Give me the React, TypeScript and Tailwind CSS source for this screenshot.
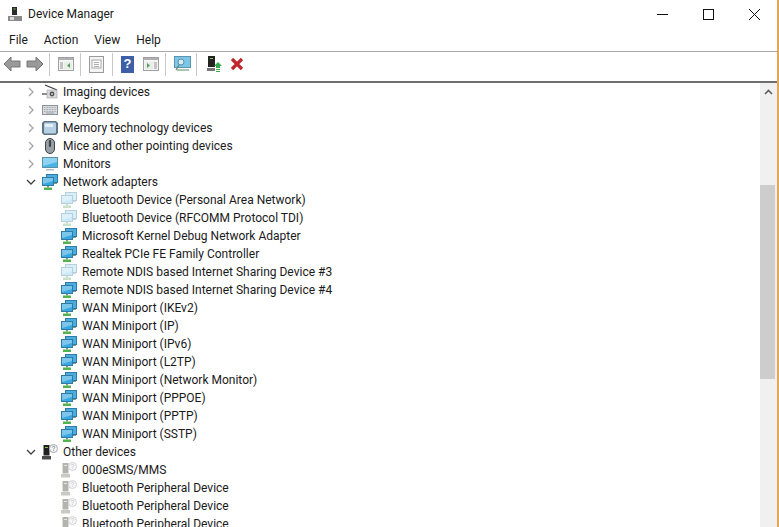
const WAN = ['IKEv2', 'IP', 'IPv6', 'L2TP', 'Network Monitor', 'PPPOE', 'PPTP', 'SSTP']

type IconKind = 'imaging' | 'keyboard' | 'memory' | 'mouse' | 'monitor' | 'net' | 'netOff' | 'other' | 'unknown'

interface Row {
  label: string
  icon: IconKind
  depth: 0 | 1
  state?: 'open' | 'closed'
}

const ROWS: Row[] = [
  { label: 'Imaging devices', icon: 'imaging', depth: 0, state: 'closed' },
  { label: 'Keyboards', icon: 'keyboard', depth: 0, state: 'closed' },
  { label: 'Memory technology devices', icon: 'memory', depth: 0, state: 'closed' },
  { label: 'Mice and other pointing devices', icon: 'mouse', depth: 0, state: 'closed' },
  { label: 'Monitors', icon: 'monitor', depth: 0, state: 'closed' },
  { label: 'Network adapters', icon: 'net', depth: 0, state: 'open' },
  { label: 'Bluetooth Device (Personal Area Network)', icon: 'netOff', depth: 1 },
  { label: 'Bluetooth Device (RFCOMM Protocol TDI)', icon: 'netOff', depth: 1 },
  { label: 'Microsoft Kernel Debug Network Adapter', icon: 'net', depth: 1 },
  { label: 'Realtek PCIe FE Family Controller', icon: 'net', depth: 1 },
  { label: 'Remote NDIS based Internet Sharing Device #3', icon: 'netOff', depth: 1 },
  { label: 'Remote NDIS based Internet Sharing Device #4', icon: 'net', depth: 1 },
  ...WAN.map((w): Row => ({ label: `WAN Miniport (${w})`, icon: 'net', depth: 1 })),
  { label: 'Other devices', icon: 'other', depth: 0, state: 'open' },
  { label: '000eSMS/MMS', icon: 'unknown', depth: 1 },
  { label: 'Bluetooth Peripheral Device', icon: 'unknown', depth: 1 },
  { label: 'Bluetooth Peripheral Device', icon: 'unknown', depth: 1 },
  { label: 'Bluetooth Peripheral Device', icon: 'unknown', depth: 1 },
]

function NetIcon({ faded }: { faded?: boolean }) {
  const edge = faded ? '#b4d0de' : '#2f7aa8'
  const back = faded ? '#d9eff8' : '#49aede'
  const front = faded ? '#cdeaf6' : '#38a8e0'
  const foot = faded ? '#c9e0c9' : '#52b352'
  return (
    <svg width="16" height="16" viewBox="0 0 16 16">
      <rect x="4.5" y="0.5" width="11" height="8" fill={back} stroke={edge} />
      <rect x="0.5" y="3.5" width="11" height="8" fill={front} stroke={edge} />
      <path d="M1 4h10v3L1 10z" fill="#ffffff" opacity="0.35" />
      <path d="M5 12h2v1.500H5z" fill={faded ? '#ccd6cc' : '#7a9a7a'} />
      <path d="M2 13.500h8V16H2z" fill={foot} />
      <path d="M12 9h3v1h-3z" fill={faded ? '#ccd6cc' : '#7d9a7d'} />
    </svg>
  )
}

function UnknownIcon({ dark }: { dark?: boolean }) {
  const body = dark ? '#222222' : '#b4b4ae'
  const base = dark ? '#4a4a4a' : '#c9c9c3'
  return (
    <svg width="16" height="16" viewBox="0 0 16 16">
      <path d="M1.500 1h6v10.500h-6z" fill={body} />
      <path d="M3 3h3v1H3z" fill={dark ? '#8ec04f' : '#e4e4e0'} />
      <path d="M0 12h9v3.500H0z" fill={base} />
      <circle cx="11.500" cy="4.500" r="4" fill="#f7f7f7" stroke={dark ? '#a8a8a8' : '#d2d2d2'} />
      <path d="M10.200 3.400c.2-1.400 2.600-1.400 2.600 0 0 1-1.300 1-1.300 2M11.500 6.300v.7" fill="none" stroke={dark ? '#6d7f96' : '#c2c8d0'} strokeWidth="0.9" />
    </svg>
  )
}

function DeviceIcon({ kind }: { kind: IconKind }) {
  switch (kind) {
    case 'imaging':
      return (
        <svg width="16" height="16" viewBox="0 0 16 16">
          <path d="M3 1l12 5" stroke="#3a3a3a" strokeWidth="1.200" fill="none" />
          <path d="M0 9h5v2H0z" fill="#8d8d8d" />
          <path d="M5 6h10v8H5z" fill="#d9d9d9" stroke="#a0a0a0" strokeWidth="0.6" />
          <circle cx="10" cy="10" r="2.400" fill="#4b4f55" />
          <circle cx="10" cy="10" r="1" fill="#cfd8e0" />
        </svg>
      )
    case 'keyboard':
      return (
        <svg width="16" height="16" viewBox="0 0 16 16">
          <rect x="0.5" y="3.5" width="15" height="9" fill="#d8dce0" stroke="#8d9298" />
          <path d="M2 5.500h12M2 7.500h12M2 9.500h12" stroke="#a4a9ae" strokeDasharray="1 0.6" />
          <path d="M4 11h8" stroke="#9aa0a6" />
        </svg>
      )
    case 'memory':
      return (
        <svg width="16" height="16" viewBox="0 0 16 16">
          <path d="M2 1h12l2 2v10l-2 2H2l-2-2V3z" fill="#5f7484" />
          <rect x="2" y="2.500" width="12" height="11" rx="1" fill="#b4d0e2" />
          <path d="M3 4h8v3H3z" fill="#e4f0f7" />
        </svg>
      )
    case 'mouse':
      return (
        <svg width="16" height="16" viewBox="0 0 16 16">
          <rect x="3.500" y="0.5" width="9" height="15" rx="4.500" fill="#98a0a8" stroke="#3f4347" />
          <rect x="6.900" y="2" width="2.200" height="7" rx="1" fill="#3f454c" />
        </svg>
      )
    case 'monitor':
      return (
        <svg width="16" height="16" viewBox="0 0 16 16">
          <rect x="0.5" y="1.5" width="15" height="10" fill="#49b4e6" stroke="#5c8fa8" />
          <path d="M1 2h14v4L1 10z" fill="#8ed4f2" />
          <path d="M4 13h8v1.500H4z" fill="#b4bcc2" />
        </svg>
      )
    case 'net':
      return <NetIcon />
    case 'netOff':
      return <NetIcon faded />
    case 'other':
      return <UnknownIcon dark />
    default:
      return <UnknownIcon />
  }
}

function Chevron({ open }: { open: boolean }) {
  return (
    <svg width="10" height="10" viewBox="0 0 10 10" className="shrink-0">
      <path d={open ? 'M1 3l4 4 4-4' : 'M3 1l4 4-4 4'} fill="none" stroke={open ? '#404040' : '#a6a6a6'} strokeWidth="1.3" />
    </svg>
  )
}

function TreeRow({ row }: { row: Row }) {
  return (
    <div className={`flex h-[18px] shrink-0 items-center ${row.depth === 1 ? 'pl-[61px]' : 'pl-[26px]'}`}>
      {row.depth === 0 && (
        <div className="mr-[6px] flex w-[10px] justify-center">
          <Chevron open={row.state === 'open'} />
        </div>
      )}
      <DeviceIcon kind={row.icon} />
      <span className="ml-[5px] whitespace-nowrap">{row.label}</span>
    </div>
  )
}

function ToolSep() {
  return <div className="h-[23px] w-px bg-[#c8c8c8]" />
}

function Toolbar() {
  return (
    <div className="flex h-[29px] shrink-0 items-center pb-[5px] pl-[3px]">
      <svg width="18" height="16" viewBox="0 0 18 16">
        <path d="M8 1L1 8l7 7v-4h9V5H8z" fill="#9a9a9a" stroke="#777777" />
      </svg>
      <svg width="18" height="16" viewBox="0 0 18 16" className="ml-[5px]">
        <path d="M10 1l7 7-7 7v-4H1V5h9z" fill="#9a9a9a" stroke="#777777" />
      </svg>
      <div className="ml-[5px]"><ToolSep /></div>
      <svg width="16" height="14" viewBox="0 0 16 14" className="ml-[8px]">
        <rect x="0.5" y="0.5" width="15" height="13" fill="#f4f4f4" stroke="#a0a0a0" />
        <path d="M1 1h14v2H1z" fill="#b0b0b0" />
        <path d="M2 5h3v7H2z" fill="#c4c4c4" />
        <path d="M6 5h8v7H6z" fill="#e6eee6" />
        <path d="M12 6v5L9 8.500z" fill="#5c9c63" />
      </svg>
      <div className="ml-[6px]"><ToolSep /></div>
      <svg width="15" height="17" viewBox="0 0 15 17" className="ml-[8px]">
        <rect x="0.5" y="0.5" width="14" height="16" fill="#f4f4f4" stroke="#9a9a9a" />
        <rect x="3" y="4" width="9" height="8" fill="#ffffff" stroke="#a8a8a8" />
        <path d="M5 6.500h5M5 8.500h5M5 10.500h5" stroke="#b0b0b0" />
      </svg>
      <div className="ml-[8px]"><ToolSep /></div>
      <div className="ml-[8px] flex h-[17px] w-[13px] items-center justify-center bg-[#3c5fa8] font-['Liberation_Sans',sans-serif] text-[13px] font-bold text-white">?</div>
      <svg width="16" height="14" viewBox="0 0 16 14" className="ml-[9px]">
        <rect x="0.5" y="0.5" width="15" height="13" fill="#f4f4f4" stroke="#a0a0a0" />
        <path d="M1 1h14v2H1z" fill="#b0b0b0" />
        <path d="M11 5h3v7h-3z" fill="#c4c4c4" />
        <path d="M2 5h8v7H2z" fill="#e6eee6" />
        <path d="M4 6v5l3-2.500z" fill="#5c9c63" />
      </svg>
      <div className="ml-[6px]"><ToolSep /></div>
      <svg width="17" height="16" viewBox="0 0 17 16" className="ml-[8px]">
        <rect x="0.5" y="0.5" width="16" height="11" fill="#7cc6e8" stroke="#5c93ad" />
        <circle cx="7" cy="6" r="3" fill="#d4eef9" stroke="#5f8ea5" />
        <path d="M5 9l-3 5M3 14h12" stroke="#5f8a6a" strokeWidth="1.200" />
      </svg>
      <div className="ml-[5px]"><ToolSep /></div>
      <svg width="15" height="16" viewBox="0 0 15 16" className="ml-[10px]">
        <path d="M1 0h7v11H1z" fill="#222222" />
        <path d="M3 2h3v1H3z" fill="#8ec04f" />
        <path d="M0 12h8v3H0z" fill="#777777" />
        <path d="M11 6l4 4h-2v2h-4v-2H7z" fill="#38a94a" />
        <path d="M9 13h4v1H9zM9 15h4v1H9z" fill="#38a94a" />
      </svg>
      <svg width="14" height="14" viewBox="0 0 14 14" className="ml-[8px]">
        <path d="M2 2l10 10M12 2L2 12" stroke="#c0272d" strokeWidth="3.200" />
      </svg>
    </div>
  )
}

export default function App() {
  return (
    <div className="flex h-[527px] w-[779px] flex-col overflow-hidden border-r-2 border-[#e3a857] bg-white font-['Roboto','Open_Sans',sans-serif] text-[12px] text-[#1a1a1a]">
      <div className="flex h-[28px] shrink-0 items-center pl-[8px]">
        <svg width="16" height="16" viewBox="0 0 16 16">
          <path d="M4 1h5v8H4z" fill="#2a2a2a" />
          <path d="M5.500 2.500h2v1h-2z" fill="#8ec04f" />
          <path d="M0 10h14v5H0z" fill="#8a8a8a" />
          <path d="M2 11h4v3H2z" fill="#d8d8d8" />
        </svg>
        <span className="ml-[4px]">Device Manager</span>
        <div className="ml-auto flex items-center pr-[17px]">
          <svg width="11" height="11" viewBox="0 0 11 11">
            <path d="M0 5.500h11" stroke="#111111" />
          </svg>
          <svg width="11" height="11" viewBox="0 0 11 11" className="ml-[35px]">
            <rect x="0.5" y="0.5" width="10" height="10" fill="none" stroke="#111111" />
          </svg>
          <svg width="11" height="11" viewBox="0 0 11 11" className="ml-[35px]">
            <path d="M0 0l11 11M11 0L0 11" stroke="#111111" />
          </svg>
        </div>
      </div>
      <div className="flex h-[24px] shrink-0 items-center gap-[16px] border-b border-[#a8a8a8] pl-[9px]">
        <span>File</span>
        <span>Action</span>
        <span>View</span>
        <span>Help</span>
      </div>
      <Toolbar />
      <div className="h-[2px] shrink-0 bg-[#6e6e6e]" />
      <div className="flex min-h-0 flex-1">
        <div className="flex min-w-0 flex-1 flex-col overflow-hidden">
          {ROWS.map((row, i) => (
            <TreeRow key={i} row={row} />
          ))}
        </div>
        <div className="flex w-[17px] shrink-0 flex-col bg-[#f0f0f0]">
          <div className="flex h-[17px] items-center justify-center">
            <svg width="9" height="6" viewBox="0 0 9 6">
              <path d="M1 5l3.500-3.500L8 5" fill="none" stroke="#606060" strokeWidth="1.600" />
            </svg>
          </div>
          <div className="mt-[85px] h-[194px] w-[15px] bg-[#cdcdcd]" />
        </div>
      </div>
    </div>
  )
}
